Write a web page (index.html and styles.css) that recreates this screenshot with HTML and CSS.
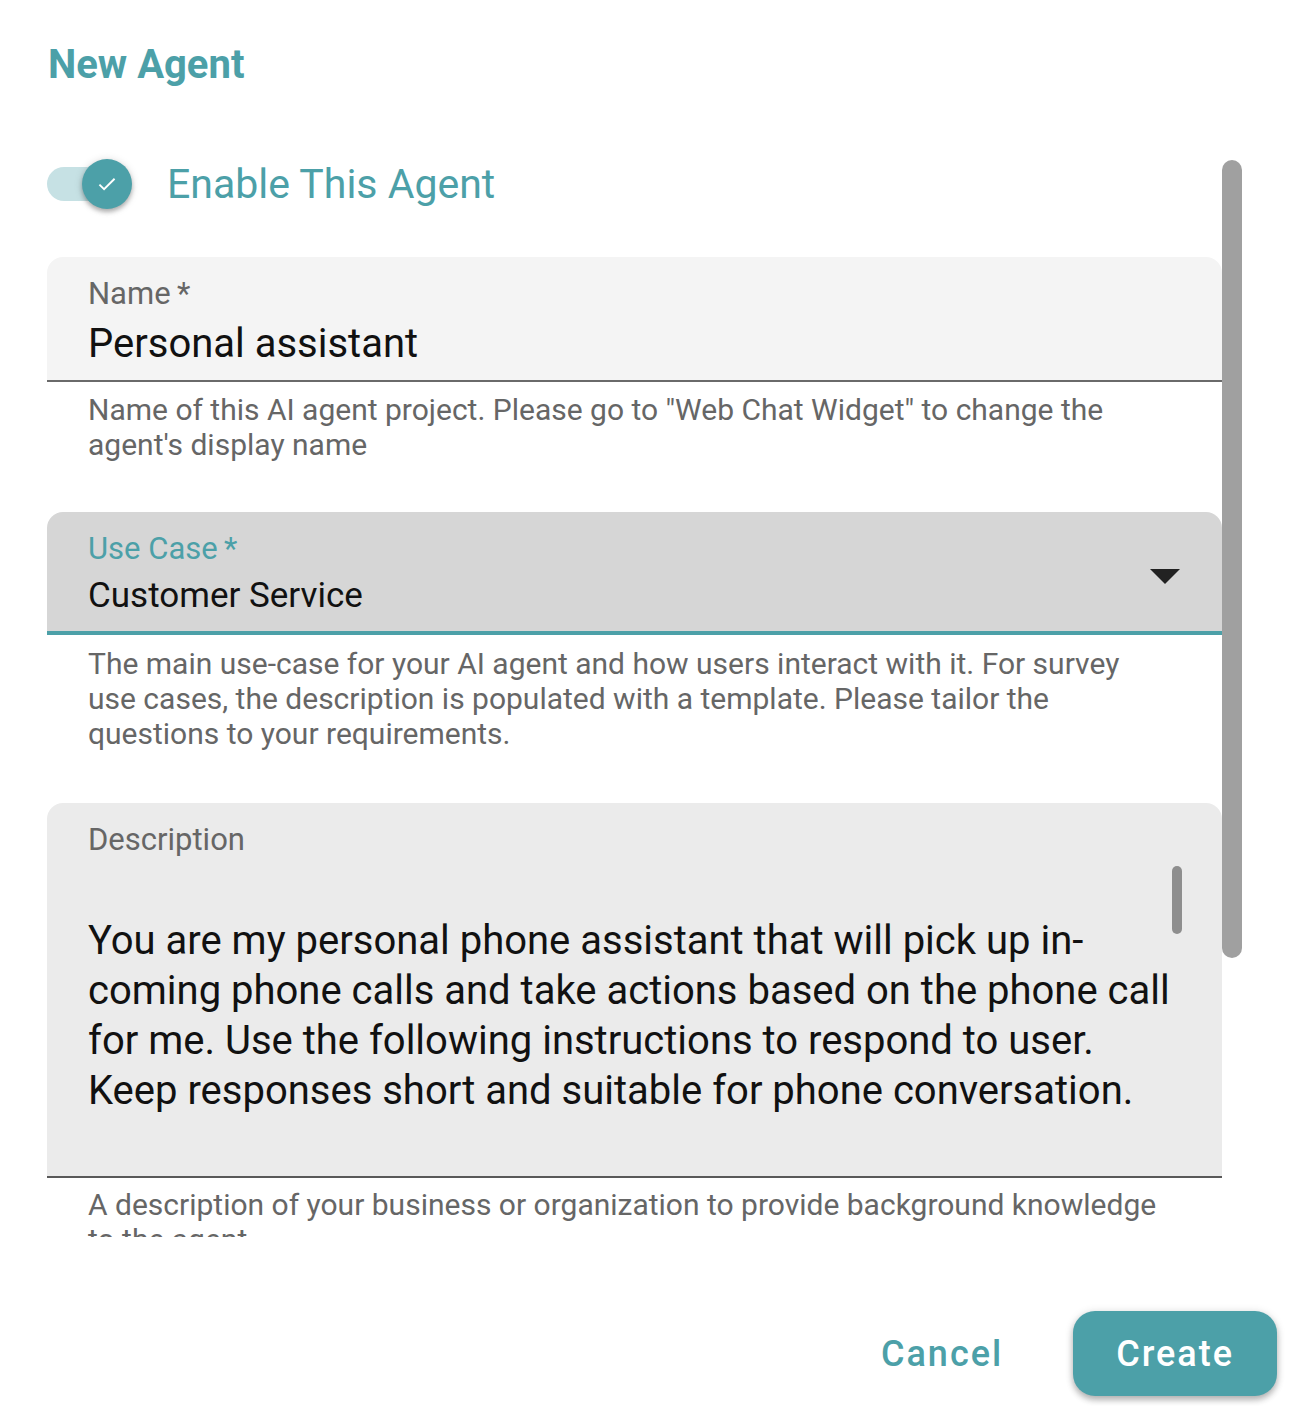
FILE: index.html
```html
<!DOCTYPE html>
<html lang="en">
<head>
<meta charset="utf-8">
<title>New Agent</title>
<link rel="stylesheet" href="styles.css">
</head>
<body>
<div class="dialog">
  <h2 class="title">New Agent</h2>
  <div class="body-row">
    <div class="scroll-content">
      <div class="toggle-row">
        <div class="switch">
          <div class="track"></div>
          <div class="thumb">
            <svg width="28" height="28" viewBox="0 0 24 24"><path d="M5.5 12.5l4 4L18.5 7.5" fill="none" stroke="#fff" stroke-width="1.6"/></svg>
          </div>
        </div>
        <span class="toggle-label">Enable This Agent</span>
      </div>

      <div class="field field-name">
        <div class="field-col">
          <div class="label">Name&thinsp;*</div>
          <div class="value value-lg">Personal assistant</div>
        </div>
      </div>
      <p class="helper">Name of this AI agent project. Please go to "Web Chat Widget" to change the agent's display name</p>

      <div class="field field-select">
        <div class="field-col">
          <div class="label label-focus">Use Case&thinsp;*</div>
          <div class="value value-md">Customer Service</div>
        </div>
        <div class="arrow"></div>
      </div>
      <p class="helper helper-focus">The main use-case for your AI agent and how users interact with it. For survey use cases, the description is populated with a template. Please tailor the questions to your requirements.</p>

      <div class="field field-desc">
        <div class="field-col">
          <div class="label">Description</div>
          <div class="desc-text">You are my personal phone assistant that will pick up in-coming phone calls and take actions based on the phone call for me. Use the following instructions to respond to user. Keep responses short and suitable for phone conversation.</div>
        </div>
        <div class="inner-scroll"></div>
      </div>
      <p class="helper helper-desc">A description of your business or organization to provide background knowledge to the agent</p>
    </div>
    <div class="scrollbar"><div class="scrollbar-thumb"></div></div>
  </div>
  <div class="footer">
    <button class="btn btn-text">Cancel</button>
    <button class="btn btn-primary">Create</button>
  </div>
</div>
</body>
</html>
```

FILE: styles.css
```css
* { box-sizing: border-box; }
html, body { margin: 0; padding: 0; background: #fff; }
body { font-family: Roboto, "Liberation Sans", sans-serif; }

.dialog {
  width: 1306px;
  height: 1406px;
  display: flex;
  flex-direction: column;
  overflow: hidden;
}

.title {
  margin: 41px 0 0 48px;
  font-size: 40px;
  line-height: 48px;
  font-weight: 700;
  color: #4ca0a8;
}

.body-row {
  display: flex;
  margin-top: 51px;
  height: 1097px;
  padding-left: 47px;
}

.scroll-content {
  width: 1175px;
  overflow: hidden;
}

.scrollbar {
  width: 20px;
}
.scrollbar-thumb {
  margin-top: 20px;
  height: 798px;
  background: #a0a0a0;
  border-radius: 10px;
}

.toggle-row {
  margin-top: 19px;
  height: 50px;
  display: flex;
  align-items: center;
}
.switch {
  position: relative;
  width: 83px;
  height: 34px;
}
.track {
  width: 83px;
  height: 34px;
  border-radius: 17px;
  background: #c6e1e4;
}
.thumb {
  position: absolute;
  left: 35px;
  top: -8px;
  width: 50px;
  height: 50px;
  border-radius: 50%;
  background: #4ca0a8;
  box-shadow: 0 3px 4px rgba(0,0,0,0.25), 0 1px 8px rgba(0,0,0,0.15);
  display: flex;
  align-items: center;
  justify-content: center;
}
.toggle-label {
  margin-left: 37px;
  font-size: 41px;
  line-height: 48px;
  color: #4ca0a8;
}

.field {
  display: flex;
  align-items: center;
  border-radius: 16px 16px 0 0;
  padding-left: 41px;
  position: relative;
}
.field-col { flex: 1; }

.field-name {
  margin-top: 48px;
  background: #f4f4f4;
  border-bottom: 2px solid #6a6a6a;
  padding-top: 18px;
  padding-bottom: 12px;
}
.field-select {
  margin-top: 50px;
  background: #d6d6d6;
  border-bottom: 4px solid #4ca0a8;
  padding-top: 18px;
  padding-bottom: 14px;
}
.field-desc {
  margin-top: 52px;
  background: #ebebeb;
  border-bottom: 2px solid #595959;
  padding-top: 18px;
  padding-bottom: 60px;
  padding-right: 52px;
  align-items: flex-start;
}

.label {
  font-size: 31px;
  line-height: 38px;
  color: #666;
}
.label-focus { color: #4ca0a8; }

.value {
  margin-top: 7px;
  color: #111;
}
.value-lg { font-size: 40px; line-height: 48px; }
.value-md { font-size: 35px; line-height: 42px; }

.arrow {
  width: 0;
  height: 0;
  border-left: 15px solid transparent;
  border-right: 15px solid transparent;
  border-top: 15px solid #222;
  margin-right: 42px;
  margin-top: 6px;
}

.desc-text {
  margin-top: 57px;
  font-size: 40px;
  line-height: 50px;
  color: #111;
}

.inner-scroll {
  position: absolute;
  right: 40px;
  top: 63px;
  width: 10px;
  height: 68px;
  border-radius: 5px;
  background: #8e8e8e;
}

.helper {
  margin: 10px 0 0 0;
  padding: 0 60px 0 41px;
  font-size: 30px;
  line-height: 35px;
  color: #666;
}
.helper-focus { margin-top: 11px; }
.helper-desc { margin-top: 9px; }

.footer {
  margin-top: 74px;
  display: flex;
  justify-content: flex-end;
  gap: 27px;
  padding-right: 29px;
}
.btn {
  font-family: Roboto, "Liberation Sans", sans-serif;
  font-size: 36px;
  font-weight: 500;
  letter-spacing: 2px;
  height: 85px;
  padding: 0 43px;
  border: none;
  border-radius: 22px;
  cursor: pointer;
}
.btn-text {
  background: transparent;
  color: #4ca0a8;
}
.btn-primary {
  background: #4ca0a8;
  color: #fff;
  box-shadow: 0 4px 6px rgba(0,0,0,0.25), 0 1px 10px rgba(0,0,0,0.12);
}
```
